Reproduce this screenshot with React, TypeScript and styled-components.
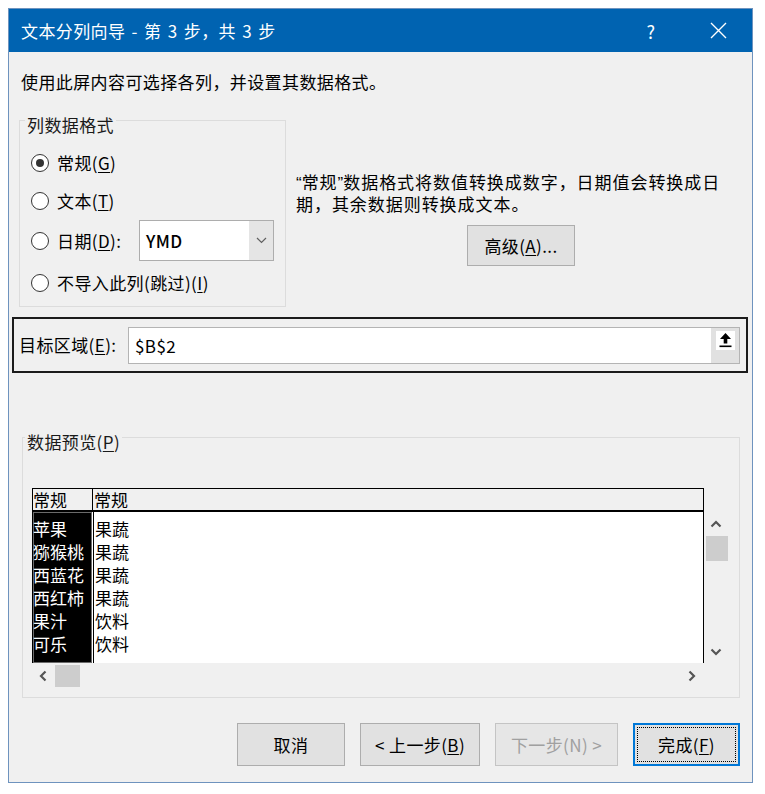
import React from 'react';
import styled, { createGlobalStyle } from 'styled-components';

const FONT = `"Noto Sans CJK SC", "Noto Sans", sans-serif`;

const GlobalStyle = createGlobalStyle`
  html, body { padding: 0; background: #ffffff; }
  body { margin: 8px; font-family: ${FONT}; }
  * { box-sizing: border-box; }
`;

const Window = styled.div`
  width: 745px;
  height: 775px;
  border: 1px solid #6e93be;
  background: #f0f0f0;
  display: flex;
  flex-direction: column;
  font-family: ${FONT};
  font-size: 17px;
  letter-spacing: 0.4px;
  color: #000;
  overflow: hidden;
`;

const TitleBar = styled.div`
  height: 43px;
  flex-shrink: 0;
  background: #0063b1;
  color: #fff;
  display: flex;
  align-items: center;
  padding-left: 12px;
`;

const TitleText = styled.div`
  flex: 1;
  font-size: 17px;
  line-height: 24px;
  word-spacing: 2px;
  white-space: nowrap;
`;

const TitleButton = styled.div<{ $w: number }>`
  width: ${(p) => p.$w}px;
  height: 100%;
  display: flex;
  align-items: center;
  justify-content: center;
  font-size: 18px;
`;

const Intro = styled.div`
  margin: 18px 0 0 12px;
  line-height: 24px;
`;

const TopSection = styled.div`
  display: flex;
  align-items: flex-start;
  margin-top: 14px;
  padding-left: 10px;
`;

const GroupBox = styled.fieldset<{ $w: number; $px: number; $pb: number }>`
  width: ${(p) => p.$w}px;
  margin: 0;
  min-inline-size: 0;
  padding: 0 ${(p) => p.$px}px ${(p) => p.$pb}px;
  border: 1px solid #dcdcdc;
  flex-shrink: 0;
`;

const PreviewGroup = styled(GroupBox)`
  margin: 52px 0 0 13px;
`;

const GroupLegend = styled.legend<{ $ml: number }>`
  padding: 8px 2px 0;
  margin-left: ${(p) => p.$ml}px;
  font-size: 17px;
  line-height: 17px;
  color: #1a1a1a;
`;

const RadioRow = styled.div<{ $mt: number }>`
  display: flex;
  align-items: center;
  margin-top: ${(p) => p.$mt}px;
`;

const RadioCircle = styled.span`
  width: 18px;
  height: 18px;
  flex-shrink: 0;
  border-radius: 50%;
  border: 1px solid #333;
  background: #fff;
  display: flex;
  align-items: center;
  justify-content: center;
`;

const RadioDot = styled.span`
  width: 8px;
  height: 8px;
  border-radius: 50%;
  background: #333;
`;

const RadioLabel = styled.span`
  margin-left: 8px;
  line-height: 24px;
  white-space: nowrap;
`;

const Key = styled.span`
  text-decoration: underline;
  text-underline-offset: 2px;
  text-decoration-thickness: 1px;
`;

const Quote = styled.span`
  font-family: "Liberation Sans", sans-serif;
  letter-spacing: 0;
`;

const Combo = styled.div`
  margin-left: auto;
  width: 135px;
  height: 41px;
  border: 1px solid #adadad;
  background: #fff;
  display: flex;
`;

const ComboValue = styled.div`
  flex: 1;
  display: flex;
  align-items: center;
  padding-left: 6px;
  font-weight: 500;
`;

const ComboArrow = styled.div`
  width: 24px;
  background: #e5e5e5;
  display: flex;
  align-items: center;
  justify-content: center;
`;

const RightCol = styled.div`
  flex: 1;
  padding: 64px 6px 0 10px;
  display: flex;
  flex-direction: column;
`;

const DescText = styled.p`
  margin: 0;
  line-height: 20px;
  letter-spacing: 0.95px;
  white-space: nowrap;
`;

const CenterRow = styled.div`
  display: flex;
  justify-content: center;
  margin-top: 11px;
`;

const Button = styled.button<{ $w: number; $default?: boolean }>`
  position: relative;
  width: ${(p) => p.$w}px;
  height: 41px;
  padding: 0;
  background: #e1e1e1;
  border: ${(p) => (p.$default ? '2px solid #0078d7' : '1px solid #adadad')};
  font-family: ${FONT};
  font-size: 17px;
  letter-spacing: 0.4px;
  color: #000;
  display: flex;
  align-items: center;
  justify-content: center;
  white-space: nowrap;
  &:disabled {
    color: #a0a0a0;
    background: #e6e6e6;
    border-color: #c4c4c4;
  }
  ${(p) =>
    p.$default &&
    `&::after {
      content: '';
      position: absolute;
      inset: 2px;
      border: 1px dotted #000;
    }`}
`;

const BottomButton = styled(Button)`
  height: 43px;
`;

const TargetBox = styled.div`
  margin: 10px 0 0 3px;
  width: 736px;
  height: 56px;
  border: 2px solid #1b1b1b;
  display: flex;
  align-items: center;
  padding: 0 6px 0 5px;
`;

const TargetLabel = styled.div`
  width: 109px;
  line-height: 24px;
  white-space: nowrap;
`;

const RefInput = styled.div`
  flex: 1;
  height: 37px;
  border: 1px solid #b4b4b4;
  background: #fff;
  display: flex;
`;

const RefValue = styled.div`
  flex: 1;
  display: flex;
  align-items: center;
  padding-left: 6px;
`;

const RefButton = styled.div`
  width: 28px;
  background: #e1e1e1;
  display: flex;
  justify-content: center;
  padding-top: 3px;
`;

const IconBox = styled.div`
  width: 19px;
  height: 19px;
  background: #fff;
  display: flex;
  align-items: center;
  justify-content: center;
`;

const PreviewTable = styled.div`
  margin-top: 38px;
  display: grid;
  grid-template-columns: 672px 24px;
  grid-template-rows: 24px 151px 25px;
  letter-spacing: 0;
`;

const TableHeader = styled.div`
  grid-column: 1;
  grid-row: 1;
  border: 1px solid #000;
  border-bottom-width: 2px;
  background: #f0f0f0;
  display: flex;
  line-height: 21px;
`;

const HeaderCell = styled.div<{ $w?: number }>`
  ${(p) => (p.$w ? `width: ${p.$w}px; border-right: 1px solid #000;` : 'flex: 1; padding-left: 1px;')}
`;

const TableBody = styled.div`
  grid-column: 1;
  grid-row: 2;
  border-left: 1px solid #000;
  border-right: 1px solid #000;
  background: #fff;
  display: flex;
`;

const DataCol = styled.div<{ $selected?: boolean }>`
  padding-top: 5px;
  line-height: 23px;
  ${(p) =>
    p.$selected
      ? `width: 60px; background: #000; color: #fff; border-right: 1px solid #fff; box-shadow: inset 0 0 0 1px #6a6a6a;`
      : `flex: 1; border-left: 1px solid #000; padding-left: 1px;`}
`;

const VScroll = styled.div`
  grid-column: 2;
  grid-row: 2;
  display: flex;
  flex-direction: column;
`;

const HScroll = styled.div`
  grid-column: 1;
  grid-row: 3;
  display: flex;
`;

const ArrowBox = styled.div<{ $w: number; $h: number }>`
  width: ${(p) => p.$w}px;
  height: ${(p) => p.$h}px;
  display: flex;
  align-items: center;
  justify-content: center;
  flex-shrink: 0;
`;

const Thumb = styled.div<{ $w: number; $h: number; $ml: number; $mt: number }>`
  width: ${(p) => p.$w}px;
  height: ${(p) => p.$h}px;
  margin-left: ${(p) => p.$ml}px;
  margin-top: ${(p) => p.$mt}px;
  background: #cdcdcd;
  flex-shrink: 0;
`;

const Spacer = styled.div`
  flex: 1;
`;

const ButtonRow = styled.div`
  display: flex;
  justify-content: flex-end;
  gap: 15px;
  margin-top: 25px;
  padding-right: 12px;
`;

const Chevron = ({ dir }: { dir: 'up' | 'down' | 'left' | 'right' }) => {
  const rot = { up: 0, right: 90, down: 180, left: 270 }[dir];
  return (
    <svg width="12" height="12" viewBox="0 0 12 12" style={{ transform: `rotate(${rot}deg)` }}>
      <polyline points="1.5,8.5 6,4 10.5,8.5" fill="none" stroke="#555" strokeWidth="2.2" />
    </svg>
  );
};

const Radio = ({ checked, children }: { checked?: boolean; children: React.ReactNode }) => (
  <>
    <RadioCircle>{checked && <RadioDot />}</RadioCircle>
    <RadioLabel>{children}</RadioLabel>
  </>
);

const col1 = ['苹果', '猕猴桃', '西蓝花', '西红柿', '果汁', '可乐'];
const col2 = ['果蔬', '果蔬', '果蔬', '果蔬', '饮料', '饮料'];

export default function App() {
  return (
    <>
      <GlobalStyle />
      <Window>
        <TitleBar>
          <TitleText>文本分列向导 - 第 3 步，共 3 步</TitleText>
          <TitleButton $w={66}>?</TitleButton>
          <TitleButton $w={68}>
            <svg width="17" height="17" viewBox="0 0 17 17">
              <path d="M1 1 L16 16 M16 1 L1 16" stroke="#fff" strokeWidth="1.4" />
            </svg>
          </TitleButton>
        </TitleBar>

        <Intro>使用此屏内容可选择各列，并设置其数据格式。</Intro>

        <TopSection>
          <GroupBox $w={267} $px={11} $pb={11}>
            <GroupLegend $ml={-6}>列数据格式</GroupLegend>
            <RadioRow $mt={18}>
              <Radio checked>
                常规(<Key>G</Key>)
              </Radio>
            </RadioRow>
            <RadioRow $mt={14}>
              <Radio>
                文本(<Key>T</Key>)
              </Radio>
            </RadioRow>
            <RadioRow $mt={7}>
              <Radio>
                日期(<Key>D</Key>):
              </Radio>
              <Combo>
                <ComboValue>YMD</ComboValue>
                <ComboArrow>
                  <svg width="11" height="7" viewBox="0 0 11 7">
                    <polyline points="1,1 5.5,5.5 10,1" fill="none" stroke="#606060" strokeWidth="1.2" />
                  </svg>
                </ComboArrow>
              </Combo>
            </RadioRow>
            <RadioRow $mt={10}>
              <Radio>
                不导入此列(跳过)(<Key>I</Key>)
              </Radio>
            </RadioRow>
          </GroupBox>

          <RightCol>
            <DescText>
              <Quote>“</Quote>常规<Quote>”</Quote>数据格式将数值转换成数字，日期值会转换成日
            </DescText>
            <DescText>期，其余数据则转换成文本。</DescText>
            <CenterRow>
              <Button $w={108}>
                高级(<Key>A</Key>)...
              </Button>
            </CenterRow>
          </RightCol>
        </TopSection>

        <TargetBox>
          <TargetLabel>
            目标区域(<Key>E</Key>):
          </TargetLabel>
          <RefInput>
            <RefValue>$B$2</RefValue>
            <RefButton>
              <IconBox>
                <svg width="15" height="16" viewBox="0 0 15 16">
                  <path d="M7.5 1 L13 7 L9.3 7 L9.3 11.5 L5.7 11.5 L5.7 7 L2 7 Z" fill="#000" />
                  <rect x="1.5" y="13.5" width="12" height="1.6" fill="#000" />
                </svg>
              </IconBox>
            </RefButton>
          </RefInput>
        </TargetBox>

        <PreviewGroup $w={718} $px={9} $pb={9}>
          <GroupLegend $ml={-7}>
            数据预览(<Key>P</Key>)
          </GroupLegend>
          <PreviewTable>
            <TableHeader>
              <HeaderCell $w={60}>常规</HeaderCell>
              <HeaderCell>常规</HeaderCell>
            </TableHeader>
            <TableBody>
              <DataCol $selected>
                {col1.map((t, i) => (
                  <div key={i}>{t}</div>
                ))}
              </DataCol>
              <DataCol>
                {col2.map((t, i) => (
                  <div key={i}>{t}</div>
                ))}
              </DataCol>
            </TableBody>
            <VScroll>
              <ArrowBox $w={24} $h={24}>
                <Chevron dir="up" />
              </ArrowBox>
              <Thumb $w={22} $h={25} $ml={2} $mt={0} />
              <Spacer />
              <ArrowBox $w={24} $h={23}>
                <Chevron dir="down" />
              </ArrowBox>
            </VScroll>
            <HScroll>
              <ArrowBox $w={22} $h={25}>
                <Chevron dir="left" />
              </ArrowBox>
              <Thumb $w={25} $h={22} $ml={1} $mt={2} />
              <Spacer />
              <ArrowBox $w={24} $h={25}>
                <Chevron dir="right" />
              </ArrowBox>
            </HScroll>
          </PreviewTable>
        </PreviewGroup>

        <ButtonRow>
          <BottomButton $w={108}>取消</BottomButton>
          <BottomButton $w={120}>
            &lt; 上一步(<Key>B</Key>)
          </BottomButton>
          <BottomButton $w={123} disabled>
            下一步(N) &gt;
          </BottomButton>
          <BottomButton $w={107} $default>
            完成(<Key>F</Key>)
          </BottomButton>
        </ButtonRow>
      </Window>
    </>
  );
}
